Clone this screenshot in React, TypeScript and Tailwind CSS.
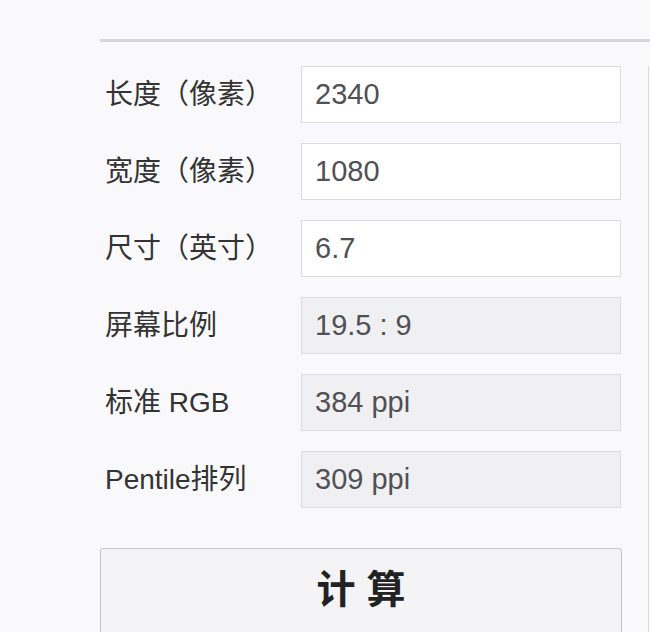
import React from "react";

const rows: { label: string; value: string; disabled: boolean }[] = [
  { label: "长度（像素）", value: "2340", disabled: false },
  { label: "宽度（像素）", value: "1080", disabled: false },
  { label: "尺寸（英寸）", value: "6.7", disabled: false },
  { label: "屏幕比例", value: "19.5 : 9", disabled: true },
  { label: "标准 RGB", value: "384 ppi", disabled: true },
  { label: "Pentile排列", value: "309 ppi", disabled: true },
];

export default function App() {
  return (
    <div
      className="h-[632px] w-[650px] overflow-hidden bg-[#f9f9fb]"
      style={{ fontFamily: '"Liberation Sans", Arial, "Noto Sans CJK SC", sans-serif' }}
    >
      <div className="pl-[100px] pt-[39px]">
        <div className="h-[3px] bg-[#d6d6db]" />
        <div className="mt-[24px] flex w-[549px] flex-col border-r border-[#dcdce0] pb-10">
          <div className="flex flex-col gap-5">
            {rows.map((r) => (
              <div key={r.label} className="flex items-center">
                <div className="w-[201px] pl-[5px] text-[28px] text-[#333333]">{r.label}</div>
                <div
                  className={`flex h-[57px] w-[320px] items-center border border-[#dcdce0] pl-[13px] text-[29px] text-[#505055] ${
                    r.disabled ? "bg-[#f0f0f3]" : "bg-white"
                  }`}
                >
                  {r.value}
                </div>
              </div>
            ))}
          </div>
          <button className="mt-[40px] flex h-[92px] w-[522px] items-center justify-center rounded-[3px] border border-[#c4c4c9] bg-[#f4f4f6] pb-[8px] text-[39px] font-bold tracking-[0.28em] text-[#222222]">
            <span className="pl-[0.28em]">计算</span>
          </button>
        </div>
      </div>
    </div>
  );
}
